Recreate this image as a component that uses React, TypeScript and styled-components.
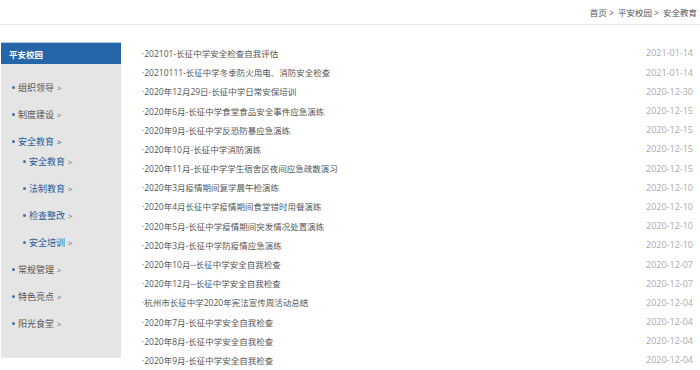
import React from "react";
import styled, { createGlobalStyle } from "styled-components";

const Global = createGlobalStyle`
  html, body { margin: 0; padding: 0; background: #fff; }
  body { font-family: "Open Sans", "Noto Sans CJK SC", sans-serif; }
  * { box-sizing: border-box; }
`;

const Page = styled.div`
  width: 700px;
  height: 370px;
  overflow: hidden;
`;

const TopBar = styled.div`
  height: 25px;
  border-bottom: 1px solid #e6e6e6;
  display: flex;
  justify-content: flex-end;
  align-items: center;
  padding-right: 3px;
  padding-bottom: 1px;
  font-size: 8.5px;
  color: #555;
`;

const Crumb = styled.span`
  margin-left: 4px;
`;

const Body = styled.div`
  display: flex;
  align-items: flex-start;
  padding-top: 17px;
  padding-left: 1px;
`;

const Sidebar = styled.aside`
  width: 120px;
  background: #e5e5e5;
  padding-bottom: 21px;
`;

const SideHead = styled.div`
  height: 22px;
  background: #2466a7;
  border-top: 1px solid #a9c9e8;
  color: #fff;
  font-size: 8.5px;
  font-weight: 600;
  display: flex;
  align-items: center;
  padding-left: 8px;
`;

const NavList = styled.ul`
  list-style: none;
  margin: 0;
  padding: 10px 0 0 0;
`;

const NavRow = styled.li<{ $sub?: boolean; $active?: boolean }>`
  height: 27px;
  display: flex;
  align-items: center;
  padding-left: ${(p) => (p.$sub ? "22px" : "11px")};
  font-size: 9px;
  color: ${(p) => (p.$active || p.$sub ? "#1f5d9c" : "#555")};
`;

const Dot = styled.span`
  width: 3px;
  height: 3px;
  border-radius: 50%;
  background: #3f73a8;
  margin-right: 3px;
`;

const Chev = styled.span<{ $dark?: boolean }>`
  margin-left: 3px;
  font-size: 8px;
  color: ${(p) => (p.$dark ? "#2b4a3a" : "#666")};
`;

const SubList = styled.ul`
  list-style: none;
  margin: -7px 0 0 0;
  padding: 0;
`;

const Main = styled.main`
  flex: 1;
  margin-left: 21px;
  padding-right: 7px;
  padding-top: 1.4px;
`;

const Row = styled.div`
  height: 19.2px;
  display: flex;
  justify-content: space-between;
  align-items: center;
  font-size: 8.5px;
`;

const Title = styled.span`
  color: #555;
`;

const DateText = styled.span`
  color: #aaa;
  font-size: 9px;
`;

const items: [string, string][] = [
  ["·202101-长征中学安全检查自我评估", "2021-01-14"],
  ["·20210111-长征中学冬季防火用电、消防安全检查", "2021-01-14"],
  ["·2020年12月29日-长征中学日常安保培训", "2020-12-30"],
  ["·2020年6月-长征中学食堂食品安全事件应急演练", "2020-12-15"],
  ["·2020年9月-长征中学反恐防暴应急演练", "2020-12-15"],
  ["·2020年10月-长征中学消防演练", "2020-12-15"],
  ["·2020年11月-长征中学学生宿舍区夜间应急疏散演习", "2020-12-15"],
  ["·2020年3月疫情期间复学晨午检演练", "2020-12-10"],
  ["·2020年4月长征中学疫情期间食堂错时用餐演练", "2020-12-10"],
  ["·2020年5月-长征中学疫情期间突发情况处置演练", "2020-12-10"],
  ["·2020年3月-长征中学防疫情应急演练", "2020-12-10"],
  ["·2020年10月--长征中学安全自我检查", "2020-12-07"],
  ["·2020年12月--长征中学安全自我检查", "2020-12-07"],
  ["·杭州市长征中学2020年宪法宣传周活动总结", "2020-12-04"],
  ["·2020年7月-长征中学安全自我检查", "2020-12-04"],
  ["·2020年8月-长征中学安全自我检查", "2020-12-04"],
  ["·2020年9月-长征中学安全自我检查", "2020-12-04"],
];

const subs = ["安全教育", "法制教育", "检查整改", "安全培训"];

export default function App() {
  return (
    <Page>
      <Global />
      <TopBar>
        <Crumb>首页 &gt;</Crumb>
        <Crumb>平安校园 &gt;</Crumb>
        <Crumb>安全教育</Crumb>
      </TopBar>
      <Body>
        <Sidebar>
          <SideHead>平安校园</SideHead>
          <NavList>
            <NavRow>
              <Dot />组织领导<Chev>&gt;</Chev>
            </NavRow>
            <NavRow>
              <Dot />制度建设<Chev>&gt;</Chev>
            </NavRow>
            <li>
              <NavRow as="div" $active>
                <Dot />安全教育<Chev $dark>&gt;</Chev>
              </NavRow>
              <SubList>
                {subs.map((s) => (
                  <NavRow key={s} $sub>
                    <Dot />
                    {s}
                    <Chev>&gt;</Chev>
                  </NavRow>
                ))}
              </SubList>
            </li>
            <NavRow>
              <Dot />常规管理<Chev>&gt;</Chev>
            </NavRow>
            <NavRow>
              <Dot />特色亮点<Chev>&gt;</Chev>
            </NavRow>
            <NavRow>
              <Dot />阳光食堂<Chev>&gt;</Chev>
            </NavRow>
          </NavList>
        </Sidebar>
        <Main>
          {items.map(([t, d], i) => (
            <Row key={i}>
              <Title>{t}</Title>
              <DateText>{d}</DateText>
            </Row>
          ))}
        </Main>
      </Body>
    </Page>
  );
}
